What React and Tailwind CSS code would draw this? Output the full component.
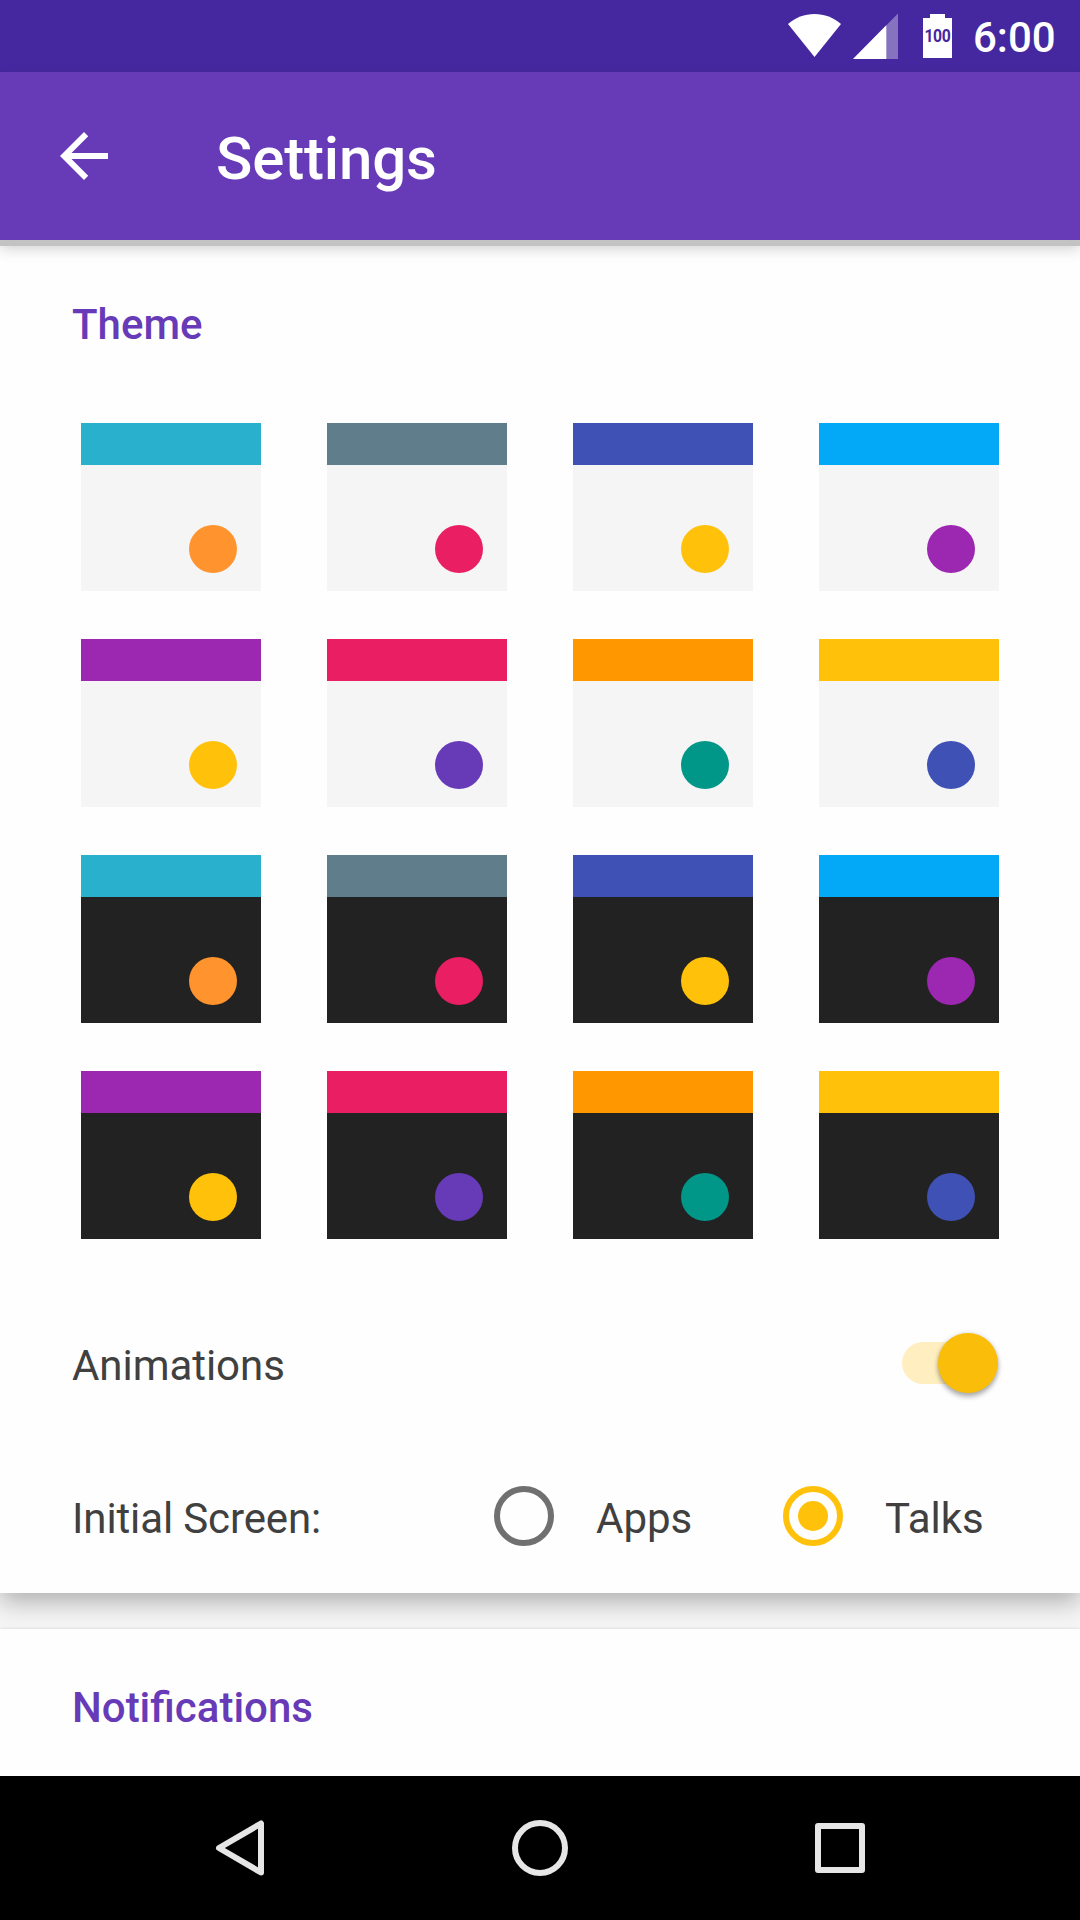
const schemes = [
  ["bg-[#29b0cc]", "bg-[#ff932e]"],
  ["bg-[#607d8b]", "bg-[#e91e63]"],
  ["bg-[#3f51b5]", "bg-[#ffc109]"],
  ["bg-[#03a9f6]", "bg-[#9c27b0]"],
  ["bg-[#9c27b0]", "bg-[#ffc109]"],
  ["bg-[#e91e63]", "bg-[#673ab7]"],
  ["bg-[#ff9800]", "bg-[#009688]"],
  ["bg-[#ffc109]", "bg-[#3f51b5]"],
];

const themes = [
  ...schemes.map(([bar, dot]) => ({ bar, dot, body: "bg-[#f5f5f5]" })),
  ...schemes.map(([bar, dot]) => ({ bar, dot, body: "bg-[#222222]" })),
];

function StatusBar() {
  return (
    <div className="flex h-[72px] items-start bg-[#45289f] pl-[788px] text-white">
      <svg className="mt-[14px] h-[43px] w-[53px]" viewBox="0 0 53 43" fill="currentColor">
        <path d="M0 10C7.500 3.500 16.500 0 26.500 0S45.500 3.500 53 10L26.500 43Z" />
      </svg>
      <svg className="mt-[13px] ml-3 h-[46px] w-[45px]" viewBox="0 0 45 46" fill="currentColor">
        <path d="M45 .5V46H0Z" opacity=".35" />
        <path d="M33.300 12.300V46H0Z" />
      </svg>
      <div className="mt-[14px] ml-[25px] flex w-[29px] flex-col items-center">
        <div className="h-1 w-[15px] bg-white" />
        <div className="flex h-10 w-[29px] justify-center bg-white font-['Roboto'] text-[17.5px] leading-[36px] font-bold tracking-[-0.4px] text-[#45289f]">
          <span className="origin-center scale-x-90">100</span>
        </div>
      </div>
      <span className="mt-[13px] ml-[21px] text-[42px] leading-[50px] font-medium">6:00</span>
    </div>
  );
}

function Toolbar() {
  return (
    <header className="relative z-10 flex h-[168px] items-center bg-[#673ab7] px-12 text-white shadow-[0_6px_0_#c3c3c3,0_8px_14px_rgba(0,0,0,0.2)]">
      <svg className="h-[72px] w-[72px]" viewBox="0 0 24 24" fill="currentColor">
        <path d="M20 11H7.830l5.590-5.590L12 4l-8 8 8 8 1.410-1.410L7.830 13H20v-2z" />
      </svg>
      <h1 className="ml-24 pt-[5px] text-[60px] leading-[70px] font-medium tracking-[-0.15px]">Settings</h1>
    </header>
  );
}

function ThemeTile({ bar, dot, body }) {
  return (
    <div className={`flex h-[168px] w-[180px] flex-col ${body}`}>
      <div className={`h-[42px] ${bar}`} />
      <div className="flex flex-1 items-end justify-end pr-6 pb-[18px]">
        <div className={`h-12 w-12 rounded-full ${dot}`} />
      </div>
    </div>
  );
}

function Radio({ label, checked }) {
  return (
    <div className="flex items-start">
      <svg
        className={checked ? "h-[60px] w-[60px] text-[#ffc109]" : "h-[60px] w-[60px] text-[#707070]"}
        viewBox="0 0 60 60"
      >
        <circle cx="30" cy="30" r="27" fill="none" stroke="currentColor" strokeWidth="6" />
        {checked && <circle cx="30" cy="30" r="15" fill="currentColor" />}
      </svg>
      <span className="mt-[8px] ml-[42px] leading-[50px]">{label}</span>
    </div>
  );
}

function NavBar() {
  return (
    <nav className="flex h-36 items-center justify-between bg-black px-[204px] text-[#e6e6e6]">
      <svg className="h-[72px] w-[72px]" viewBox="0 0 72 72" fill="none" stroke="currentColor" strokeWidth="6" strokeLinejoin="round">
        <path d="M57 11.500V60.500L15 36Z" />
      </svg>
      <svg className="h-[72px] w-[72px]" viewBox="0 0 72 72" fill="none" stroke="currentColor" strokeWidth="6">
        <circle cx="36" cy="36" r="25" />
      </svg>
      <svg className="h-[72px] w-[72px]" viewBox="0 0 72 72" fill="none" stroke="currentColor" strokeWidth="6" strokeLinejoin="round">
        <rect x="14" y="14" width="44" height="44" />
      </svg>
    </nav>
  );
}

export default function App() {
  return (
    <div className="flex h-[1920px] w-[1080px] flex-col overflow-hidden bg-[#f5f5f5] font-['Roboto',sans-serif]">
      <StatusBar />
      <Toolbar />
      <main className="flex flex-1 flex-col gap-9 text-[42px] text-[#404040]">
        <section className="flex h-[1353px] flex-col bg-[#fefefe] shadow-[0_8px_24px_rgba(0,0,0,0.3)]">
          <h2 className="mt-[60px] ml-[72px] leading-[50px] font-medium text-[#673ab7]">Theme</h2>
          <div className="mt-[73px] grid grid-cols-[repeat(4,180px)] gap-x-[66px] gap-y-12 pl-[81px]">
            {themes.map((theme, i) => (
              <ThemeTile key={i} {...theme} />
            ))}
          </div>
          <div className="mt-[93px] flex h-[64px] items-center justify-between pr-[82px] pl-[72px]">
            <span className="pt-[4px] leading-[50px] tracking-[-0.05px]">Animations</span>
            <div className="-mt-[2px] flex h-[42px] w-[96px] items-center justify-end rounded-full bg-[#ffeebf]">
              <div className="h-[60px] w-[60px] shrink-0 rounded-full bg-[#fabe0a] shadow-[0_4px_5px_rgba(0,0,0,0.28),0_0_5px_rgba(0,0,0,0.14)]" />
            </div>
          </div>
          <div className="mt-[90px] flex items-start pl-[72px]">
            <span className="mt-[8px] w-[422px] leading-[50px] tracking-[-0.12px]">Initial Screen:</span>
            <div className="w-[289px]">
              <Radio label="Apps" />
            </div>
            <Radio label="Talks" checked />
          </div>
        </section>
        <section className="flex-1 bg-[#fefefe] shadow-[0_0_3px_rgba(0,0,0,0.15)]">
          <h2 className="mt-[54px] ml-[72px] leading-[50px] font-medium text-[#673ab7]">Notifications</h2>
        </section>
      </main>
      <NavBar />
    </div>
  );
}
